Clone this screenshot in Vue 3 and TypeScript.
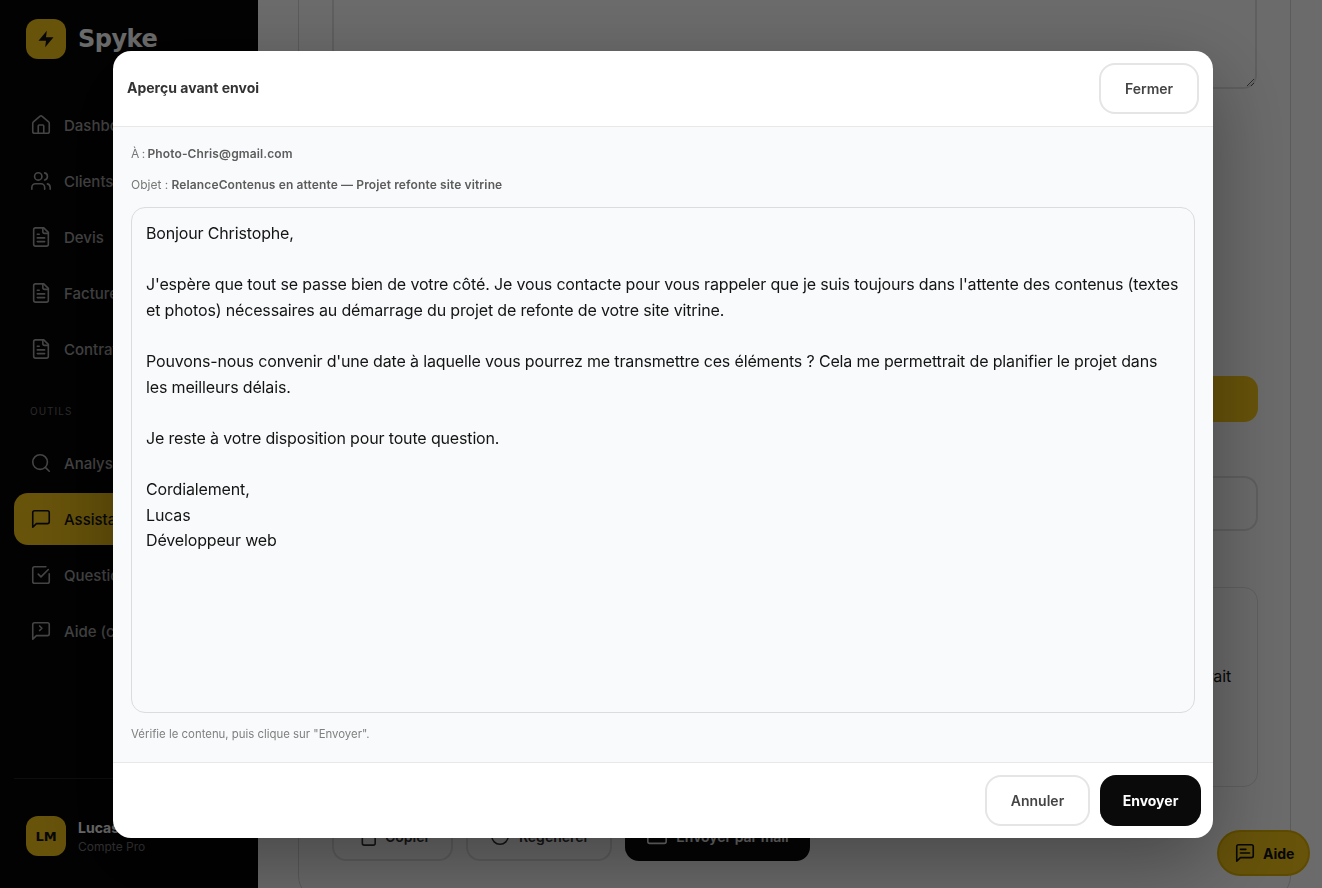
<script setup lang="ts">
import { ref } from 'vue'

const message = 'M21 15a2 2 0 0 1-2 2H7l-4 4V5a2 2 0 0 1 2-2h14a2 2 0 0 1 2 2z'
const fileText = [
  'M15 2H6a2 2 0 0 0-2 2v16a2 2 0 0 0 2 2h12a2 2 0 0 0 2-2V7Z',
  'M14 2v4a2 2 0 0 0 2 2h4',
  'M10 9H8',
  'M16 13H8',
  'M16 17H8',
]

const mainNav = [
  {
    label: 'Dashboard',
    icon: [
      'M15 21v-8a1 1 0 0 0-1-1h-4a1 1 0 0 0-1 1v8',
      'M3 10a2 2 0 0 1 .709-1.528l7-5.999a2 2 0 0 1 2.582 0l7 5.999A2 2 0 0 1 21 10v9a2 2 0 0 1-2 2H5a2 2 0 0 1-2-2z',
    ],
  },
  {
    label: 'Clients',
    icon: [
      'M16 21v-2a4 4 0 0 0-4-4H6a4 4 0 0 0-4 4v2',
      'M5 7a4 4 0 1 0 8 0a4 4 0 1 0-8 0',
      'M22 21v-2a4 4 0 0 0-3-3.87',
      'M16 3.13a4 4 0 0 1 0 7.75',
    ],
  },
  { label: 'Devis', icon: fileText },
  { label: 'Factures', icon: fileText },
  { label: 'Contrats', icon: fileText },
]

const toolNav = [
  { label: 'Analyse', icon: ['M3 11a8 8 0 1 0 16 0a8 8 0 1 0-16 0', 'm21 21-4.3-4.3'], active: false },
  { label: 'Assistant', icon: [message], active: true },
  {
    label: 'Questionnaires',
    icon: ['M21 10.656V19a2 2 0 0 1-2 2H5a2 2 0 0 1-2-2V5a2 2 0 0 1 2-2h12.344', 'm9 11 3 3L20 6'],
    active: false,
  },
  {
    label: 'Aide (chat)',
    icon: [message, 'M10.5 6.5 13 9l-2.5 2.5'],
    active: false,
  },
]

const draft = ref(`Bonjour Christophe,

J'espère que tout se passe bien de votre côté. Je vous contacte pour vous rappeler que je suis toujours dans l'attente des contenus (textes et photos) nécessaires au démarrage du projet de refonte de votre site vitrine.

Pouvons-nous convenir d'une date à laquelle vous pourrez me transmettre ces éléments ? Cela me permettrait de planifier le projet dans les meilleurs délais.

Je reste à votre disposition pour toute question.

Cordialement,
Lucas
Développeur web`)
</script>

<template>
  <div class="shell">
    <aside class="sidebar">
      <div class="brand">
        <span class="brand-mark">
          <svg viewBox="0 0 24 24" width="20" height="20"><path d="M13 2 3 14h9l-1 8 10-12h-9l1-8z" /></svg>
        </span>
        <span class="brand-name">Spyke</span>
      </div>

      <nav class="nav">
        <a v-for="item in mainNav" :key="item.label" class="nav-item">
          <svg class="icon" viewBox="0 0 24 24"><path v-for="d in item.icon" :key="d" :d="d" /></svg>
          {{ item.label }}
        </a>
      </nav>

      <div class="nav-title">OUTILS</div>

      <nav class="nav">
        <a v-for="item in toolNav" :key="item.label" class="nav-item" :class="{ active: item.active }">
          <svg class="icon" viewBox="0 0 24 24"><path v-for="d in item.icon" :key="d" :d="d" /></svg>
          {{ item.label }}
        </a>
      </nav>

      <div class="account">
        <span class="avatar">LM</span>
        <div>
          <div class="account-name">Lucas Martin</div>
          <div class="account-plan">Compte Pro</div>
        </div>
      </div>
    </aside>

    <main class="main">
      <section class="card">
        <textarea class="brief"></textarea>
        <button type="button" class="generate">Générer</button>
        <div class="select-box"></div>
        <div class="result">
          <p>Pouvons-nous convenir d'une date à laquelle vous pourrez me transmettre ces éléments ? Cela me permettrait</p>
        </div>
        <div class="actions">
          <button type="button" class="btn-ghost copy">
            <svg class="icon" viewBox="0 0 24 24"><path d="M10 8h10a2 2 0 0 1 2 2v10a2 2 0 0 1-2 2H10a2 2 0 0 1-2-2V10a2 2 0 0 1 2-2z" /></svg>
            Copier
          </button>
          <button type="button" class="btn-ghost regen">
            <svg class="icon" viewBox="0 0 24 24"><path d="M3 12a9 9 0 1 0 18 0a9 9 0 1 0-18 0" /></svg>
            Régénérer
          </button>
          <button type="button" class="btn-dark">
            <svg class="icon" viewBox="0 0 24 24"><path d="M4 4h16a2 2 0 0 1 2 2v12a2 2 0 0 1-2 2H4a2 2 0 0 1-2-2V6a2 2 0 0 1 2-2z" /></svg>
            Envoyer par mail
          </button>
        </div>
      </section>
    </main>

    <button type="button" class="help">
      <svg class="icon" viewBox="0 0 24 24">
        <path :d="message" />
        <path d="M13 8H7" />
        <path d="M17 12H7" />
      </svg>
      Aide
    </button>

    <div class="backdrop">
      <div class="modal">
        <header class="modal-head">
          <h2>Aperçu avant envoi</h2>
          <button type="button" class="btn-outline close">Fermer</button>
        </header>

        <div class="modal-body">
          <p class="meta"><span class="to">À : </span><strong>Photo-Chris@gmail.com</strong></p>
          <p class="meta subject">Objet : <strong>RelanceContenus en attente — Projet refonte site vitrine</strong></p>
          <textarea v-model="draft" class="mail" readonly></textarea>
          <p class="hint">Vérifie le contenu, puis clique sur "Envoyer".</p>
        </div>

        <footer class="modal-foot">
          <button type="button" class="btn-outline cancel">Annuler</button>
          <button type="button" class="btn-send">Envoyer</button>
        </footer>
      </div>
    </div>
  </div>
</template>

<style>
html,
body {
  margin: 0;
  height: 100%;
  overflow: hidden;
}
</style>

<style scoped>
.shell {
  display: flex;
  height: 888px;
  overflow: hidden;
  background: #fff;
  color: #141414;
  font-family: Inter, "Noto Sans", sans-serif;
}

button,
textarea {
  font-family: inherit;
}

.sidebar {
  flex: 0 0 258px;
  display: flex;
  flex-direction: column;
  box-sizing: border-box;
  padding: 19px 0 32px;
  background: #050505;
  color: #a3a3a3;
}

.brand {
  display: flex;
  align-items: center;
  gap: 12px;
  padding-left: 26px;
  margin-bottom: 40px;
}

.brand-mark {
  display: flex;
  align-items: center;
  justify-content: center;
  width: 40px;
  height: 40px;
  border-radius: 12px;
  background: #f5c518;
}

.brand-mark path {
  fill: #111;
}

.brand-name {
  color: #fff;
  font-family: "DejaVu Sans", sans-serif;
  font-size: 24px;
  font-weight: 700;
  letter-spacing: -0.5px;
}

.nav {
  display: flex;
  flex-direction: column;
  gap: 4px;
  padding: 0 0 0 14px;
}

.nav-item {
  display: flex;
  align-items: center;
  gap: 12px;
  height: 52px;
  padding-left: 16px;
  border-radius: 14px;
  font-size: 15px;
  font-weight: 500;
}

.nav-item.active {
  background: #f5c518;
  color: #111;
}

.nav-title {
  margin: 30px 0 20px 30px;
  font-size: 10px;
  letter-spacing: 1px;
  color: #666;
}

.icon {
  flex: none;
  width: 22px;
  height: 22px;
  fill: none;
  stroke: currentColor;
  stroke-width: 1.75;
  stroke-linecap: round;
  stroke-linejoin: round;
}

.account {
  display: flex;
  align-items: center;
  gap: 12px;
  margin: auto 0 0 14px;
  padding: 37px 0 0 12px;
  border-top: 1px solid #222;
}

.avatar {
  display: flex;
  align-items: center;
  justify-content: center;
  width: 40px;
  height: 40px;
  border-radius: 12px;
  background: #f5c518;
  color: #111;
  font-family: "DejaVu Sans", sans-serif;
  font-size: 13px;
  font-weight: 700;
}

.account-name {
  color: #fff;
  font-size: 14px;
  font-weight: 700;
}

.account-plan {
  margin-top: 3px;
  font-size: 12px;
  color: #777;
}

.main {
  flex: 1;
  min-width: 0;
  padding-left: 40px;
}

.card {
  box-sizing: border-box;
  width: 993px;
  height: 960px;
  margin-top: -60px;
  padding: 0 32px 0 33px;
  border: 1px solid #d8d8d8;
  border-radius: 24px;
}

.brief {
  display: block;
  box-sizing: border-box;
  width: 925px;
  height: 120px;
  margin-top: 28px;
  border: 2px solid #e2e2e2;
  border-radius: 14px;
  background: #fff;
}

.generate {
  display: block;
  width: 926px;
  height: 46px;
  margin-top: 287px;
  border: 0;
  border-radius: 14px;
  background: #f5c518;
  font-size: 15px;
  font-weight: 700;
}

.select-box {
  box-sizing: border-box;
  height: 55px;
  margin-top: 54px;
  border: 2px solid #e2e2e2;
  border-radius: 14px;
}

.result {
  box-sizing: border-box;
  height: 200px;
  margin-top: 56px;
  padding-top: 76px;
  border: 1px solid #e2e2e2;
  border-radius: 14px;
  font-size: 16px;
  line-height: 25.6px;
  letter-spacing: -0.15px;
}

.result p {
  margin: 0;
  padding-right: 26px;
  text-align: right;
  white-space: nowrap;
}

.actions {
  display: flex;
  gap: 13px;
  margin-top: 24px;
}

.actions button {
  display: flex;
  align-items: center;
  justify-content: center;
  gap: 8px;
  box-sizing: border-box;
  height: 50px;
  border-radius: 14px;
  font-size: 14px;
  font-weight: 600;
}

.btn-ghost {
  border: 2px solid #e2e2e2;
  background: #fff;
  color: #333;
}

.copy {
  width: 121px;
}

.regen {
  width: 146px;
}

.btn-dark {
  width: 185px;
  border: 0;
  background: #0a0a0a;
  color: #fff;
}

.help {
  position: fixed;
  left: 1217px;
  top: 830px;
  display: flex;
  align-items: center;
  gap: 7px;
  box-sizing: border-box;
  width: 93px;
  height: 46px;
  padding: 0 15px;
  border: 2px solid #e0b400;
  border-radius: 23px;
  background: #f5c518;
  color: #111;
  font-size: 14px;
  font-weight: 700;
}

.backdrop {
  position: fixed;
  inset: 0;
  display: flex;
  align-items: center;
  justify-content: center;
  padding-left: 4px;
  background: rgba(0, 0, 0, 0.58);
}

.modal {
  display: flex;
  flex-direction: column;
  width: 1100px;
  height: 787px;
  overflow: hidden;
  border-radius: 18px;
  background: #fff;
  box-shadow: 0 25px 80px rgba(0, 0, 0, 0.35);
}

.modal-head {
  display: flex;
  align-items: center;
  justify-content: space-between;
  height: 75px;
  padding: 0 14px;
  border-bottom: 1px solid #e8e8e8;
}

.modal-head h2 {
  margin: 0 0 2px;
  font-size: 14px;
  font-weight: 700;
  color: #333;
}

.btn-outline {
  box-sizing: border-box;
  height: 51px;
  border: 2px solid #e5e5e5;
  border-radius: 16px;
  background: #fff;
  color: #444;
  font-size: 14px;
  font-weight: 600;
}

.close {
  width: 100px;
}

.modal-body {
  flex: 1;
  display: flex;
  flex-direction: column;
  min-height: 0;
  padding: 19px 18px 0;
  background: #f9fafb;
}

.meta {
  margin: 0;
  font-size: 12px;
  line-height: 15px;
  color: #777;
}

.meta strong {
  font-weight: 600;
  color: #5c5c5c;
  letter-spacing: 0.12px;
}

.to {
  letter-spacing: -0.5px;
}

.subject {
  margin-top: 16px;
}

.mail {
  box-sizing: border-box;
  width: 100%;
  height: 506px;
  margin-top: 15px;
  padding: 13.5px 14px 12px;
  border: 1px solid #dcdcdf;
  border-radius: 14px;
  background: #f9fafb;
  color: #141414;
  font-size: 16px;
  line-height: 25.6px;
  letter-spacing: -0.15px;
  outline: 0;
  resize: none;
}

.hint {
  margin: 14px 0 0;
  font-size: 11.4px;
  line-height: 15px;
  color: #808080;
}

.modal-foot {
  display: flex;
  justify-content: flex-end;
  align-items: center;
  gap: 10px;
  height: 75px;
  padding-right: 12px;
  border-top: 1px solid #e8e8e8;
}

.cancel {
  width: 105px;
}

.btn-send {
  box-sizing: border-box;
  width: 101px;
  height: 51px;
  border: 0;
  border-radius: 16px;
  background: #0a0a0a;
  color: #fff;
  font-size: 14px;
  font-weight: 700;
}
</style>
